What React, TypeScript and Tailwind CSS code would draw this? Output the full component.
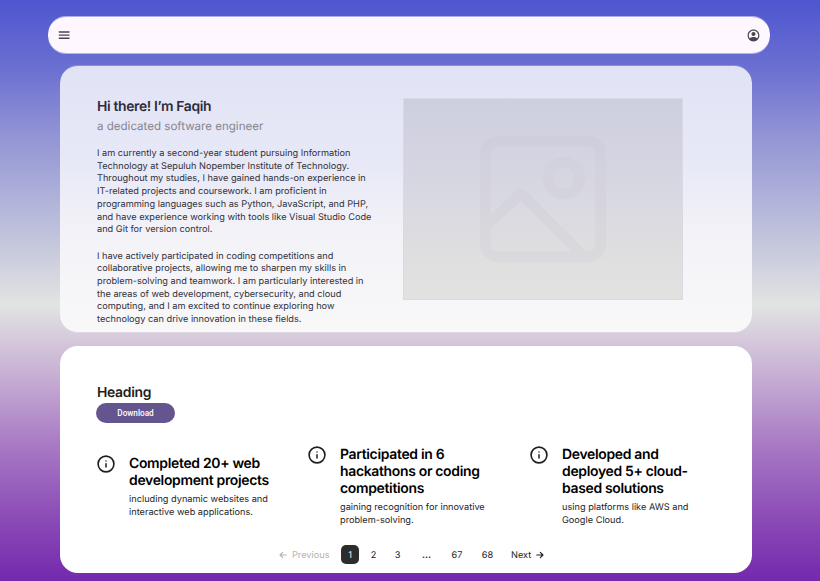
import React from 'react';

const intro = [
  'I am currently a second-year student pursuing Information',
  'Technology at Sepuluh Nopember Institute of Technology.',
  'Throughout my studies, I have gained hands-on experience in',
  'IT-related projects and coursework. I am proficient in',
  'programming languages such as Python, JavaScript, and PHP,',
  'and have experience working with tools like Visual Studio Code',
  'and Git for version control.',
];

const details = [
  'I have actively participated in coding competitions and',
  'collaborative projects, allowing me to sharpen my skills in',
  'problem-solving and teamwork. I am particularly interested in',
  'the areas of web development, cybersecurity, and cloud',
  'computing, and I am excited to continue exploring how',
  'technology can drive innovation in these fields.',
];

const cards = [
  {
    place: 'w-[211px] pt-[9px]',
    title: ['Completed 20+ web', 'development projects'],
    body: ['including dynamic websites and', 'interactive web applications.'],
  },
  {
    place: 'w-[222px]',
    title: ['Participated in 6', 'hackathons or coding', 'competitions'],
    body: ['gaining recognition for innovative', 'problem-solving.'],
  },
  {
    place: 'w-[190px]',
    title: ['Developed and', 'deployed 5+ cloud-', 'based solutions'],
    body: ['using platforms like AWS and', 'Google Cloud.'],
  },
];

function Lines({ items }: { items: string[] }) {
  return (
    <>
      {items.map((line) => (
        <span key={line} className="block whitespace-nowrap">
          {line}
        </span>
      ))}
    </>
  );
}

function MenuIcon() {
  return (
    <svg width="12" height="10" viewBox="0 0 12 10" className="text-[#49454f]" fill="currentColor">
      <path d="M.8 1.3h10.7v1.4H.8zM.8 4.4h10.7v1.4H.8zM.8 7.5h10.7v1.4H.8z" />
    </svg>
  );
}

function AccountIcon() {
  return (
    <svg width="13" height="13" viewBox="1 1 22 22" fill="#49454f">
      <path d="M12 2C6.48 2 2 6.48 2 12s4.48 10 10 10 10-4.48 10-10S17.52 2 12 2zm0 2c4.41 0 8 3.59 8 8 0 1.82-.62 3.49-1.64 4.83C16.93 15.09 13.46 14.5 12 14.5s-4.93.59-6.36 2.33A7.95 7.95 0 0 1 4 12c0-4.41 3.59-8 8-8zm0 2a3.5 3.5 0 1 0 0 7 3.5 3.5 0 0 0 0-7z" />
    </svg>
  );
}

function InfoIcon() {
  return (
    <svg width="18" height="18" viewBox="0 0 18 18" fill="none" stroke="#1e1e1e" strokeLinecap="round" className="shrink-0">
      <circle cx="9" cy="9" r="7.9" strokeWidth="1.6" />
      <path d="M9 8.8v3.2M9 5.9v.1" strokeWidth="1.5" />
    </svg>
  );
}

function Arrow({ back = false }: { back?: boolean }) {
  return (
    <svg width="8" height="8" viewBox="0 0 8 8" fill="none" stroke="currentColor" strokeWidth="1.1" strokeLinecap="round" strokeLinejoin="round">
      {back ? <path d="M7.2 4H1M3.7 1.3 1 4l2.7 2.7" /> : <path d="M.8 4H7M4.3 1.3 7 4 4.3 6.7" />}
    </svg>
  );
}

function Placeholder() {
  return (
    <div className="mt-[32px] ml-[343px] flex h-[202px] w-[280px] items-center justify-center border border-[#d9d9e1] bg-[linear-gradient(180deg,#cdcfdf_0%,#d3d3e1_25%,#d9d9e2_53%,#dadae0_56%,#dfdfe0_80%,#e2e2e1_100%)]">
      <svg width="126" height="126" viewBox="0 0 126 126" fill="none" stroke="#c5c0cc" strokeOpacity=".17" strokeWidth="10.6">
        <path
          d="M18 5.3H108A12.7 12.7 0 0 1 120.7 18V108A12.7 12.7 0 0 1 108 120.7H18A12.7 12.7 0 0 1 5.3 108V18A12.7 12.7 0 0 1 18 5.3ZM5.3 90.5 40.8 57.5 101 117.5"
          strokeLinejoin="round"
        />
        <circle cx="84" cy="42" r="15.8" />
      </svg>
    </div>
  );
}

export default function App() {
  return (
    <main className="flex h-[581px] w-[820px] flex-col overflow-hidden bg-[linear-gradient(180deg,#4e56d0_0%,#6c70d1_12%,#9193d5_23%,#b7bada_37%,#e2e3e2_52.5%,#c9b1d4_64%,#a778c4_77%,#8745b5_91%,#7429ad_100%)] pt-[16px] font-['Inter',sans-serif] [text-rendering:geometricPrecision]">
      <header className="ml-[48px] flex h-[38px] w-[722px] items-center justify-between rounded-[18px] border-y border-white/50 bg-[#fef7ff] bg-clip-padding pr-[10px] pl-[10px]">
        <MenuIcon />
        <AccountIcon />
      </header>

      <section className="mt-[11px] ml-[60px] flex h-[268px] w-[692px] rounded-[18px] border-y border-white/20 bg-[linear-gradient(180deg,#e1e3f5_0%,#e8e9f7_38%,#f3f2f8_62%,#f8f8f8_100%)] bg-clip-padding">
        <div className="w-0 shrink-0 pt-[33px]">
          <div className="ml-[37px] w-[290px]">
            <h1 className="text-[13.9px] leading-[17px] font-semibold tracking-[-0.35px] text-[#2d2d3d]">Hi there! I’m Faqih</h1>
            <p className="mt-[3px] text-[11.55px] leading-[14px] text-[#858591]">a dedicated software engineer</p>
            <div className="mt-[15px] text-[9.2px] leading-[12.7px] text-[#30303a]">
              <p>
                <Lines items={intro} />
              </p>
              <p className="mt-[13.7px]">
                <Lines items={details} />
              </p>
            </div>
          </div>
        </div>
        <Placeholder />
      </section>

      <section className="mt-[13px] ml-[60px] h-[227px] w-[692px] rounded-[18px] bg-white pt-[39px] pl-[36px]">
        <h2 className="ml-[1px] text-[13.9px] leading-[17px] font-semibold tracking-[-0.3px] text-[#1e1e1e]">Heading</h2>
        <button className="mt-[1px] flex h-[20px] w-[79px] items-center justify-center rounded-full bg-[#65558f] font-['Roboto',sans-serif] text-[8.2px] font-medium text-white">
          Download
        </button>
        <div className="mt-[23px] ml-[1px] flex h-[84px]">
          {cards.map((card) => (
            <article key={card.title[0]} className={`${card.place} flex shrink-0 gap-[14px]`}>
              <InfoIcon />
              <div>
                <h3 className="text-[13.95px] leading-[17px] font-semibold tracking-[-0.32px] text-black">
                  <Lines items={card.title} />
                </h3>
                <p className="mt-[5.4px] text-[9.2px] leading-[12.7px] text-[#1e1e1e]">
                  <Lines items={card.body} />
                </p>
              </div>
            </article>
          ))}
        </div>
        <nav className="mt-[15px] ml-[183px] flex h-[19px] items-center text-[9.2px] leading-[19px] text-[#1e1e1e]">
          <span className="flex w-[62px] items-center gap-[5px] text-[#b3b3b3]">
            <Arrow back />
            <span className="pt-px">Previous</span>
          </span>
          <span className="h-[19px] w-[18px] rounded-[5px] bg-[#2c2c2c] pt-px text-center text-[#f5f5f5]">1</span>
          <span className="w-[29px] pt-px text-center">2</span>
          <span className="w-[19px] pt-px text-center">3</span>
          <span className="w-[39px] pt-px text-center font-bold">...</span>
          <span className="w-[22px] pt-px text-center">67</span>
          <span className="w-[39px] pt-px text-center">68</span>
          <span className="ml-[4px] flex items-center gap-[5px]">
            <span className="pt-px">Next</span>
            <Arrow />
          </span>
        </nav>
      </section>
    </main>
  );
}
